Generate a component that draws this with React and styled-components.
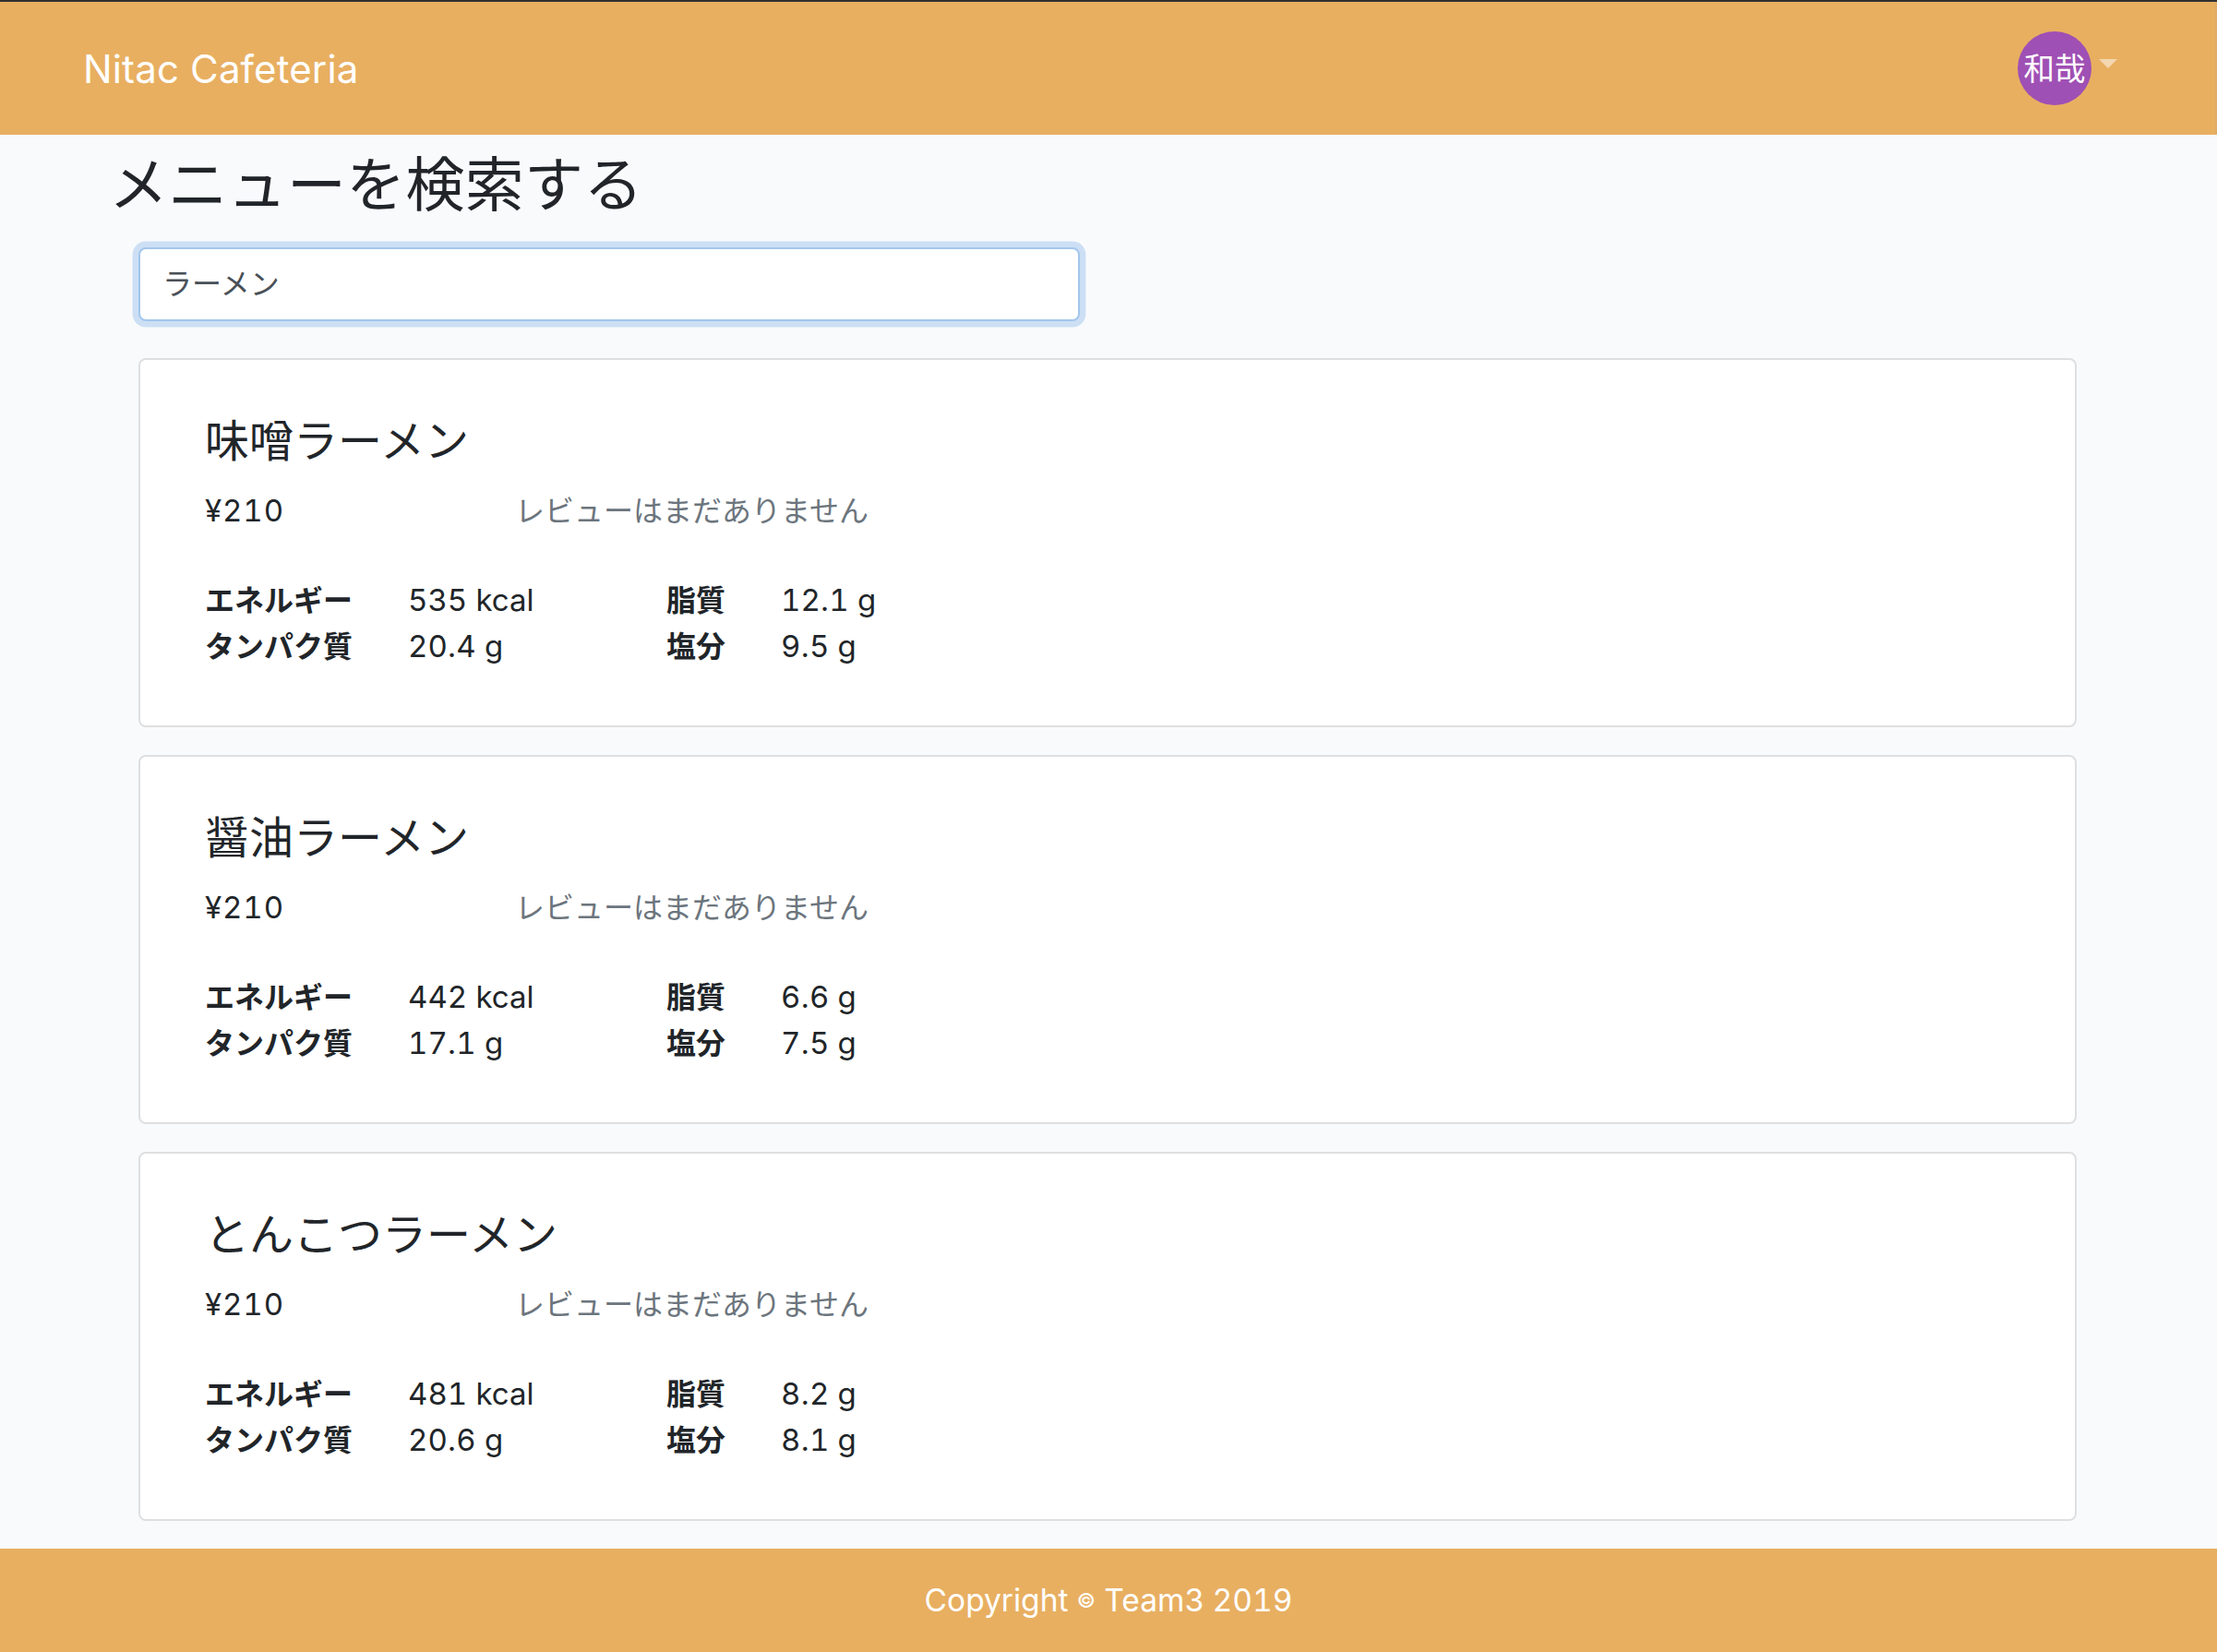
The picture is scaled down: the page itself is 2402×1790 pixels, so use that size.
import React, { useState } from "react";
import styled, { createGlobalStyle } from "styled-components";

const GlobalStyle = createGlobalStyle`
  *, *::before, *::after { box-sizing: border-box; }
  body {
    margin: 0;
    background: #f9fafc;
    color: #212529;
    font-family: "Noto Sans CJK JP", sans-serif;
    font-size: 32px;
    line-height: 50px;
  }
`;

const Page = styled.div`
  display: flex;
  flex-direction: column;
  height: 1790px;
  border-top: 2px solid #303030;
`;

const Latin = styled.span`
  font-family: Inter, "Noto Sans CJK JP", sans-serif;
  font-weight: 400;
  font-size: ${(p) => p.$size || 33}px;
  letter-spacing: ${(p) => p.$spacing || 0}px;
  white-space: pre;
`;

const Digits = styled.span`
  font-variant-numeric: tabular-nums;
`;

const Navbar = styled.nav`
  display: flex;
  align-items: center;
  justify-content: space-between;
  flex: none;
  height: 144px;
  padding: 0 106px 0 90px;
  border-right: 2px solid #dfac66;
  background: #e8af61;
  color: #fff;
`;

const Brand = styled.a`
  padding-top: 2px;
  line-height: 60px;
`;

const UserMenu = styled.div`
  display: flex;
  align-items: center;
  gap: 8px;
`;

const Avatar = styled.div`
  display: flex;
  align-items: center;
  justify-content: center;
  width: 80px;
  height: 80px;
  padding-bottom: 2px;
  border-radius: 50%;
  background: #9f50b4;
  font-size: 33.6px;
  white-space: nowrap;
`;

const Caret = styled.span`
  border: 10px solid transparent;
  border-top-color: rgba(255, 255, 255, 0.5);
  border-bottom: 0;
  margin-bottom: 10px;
`;

const Main = styled.main`
  flex: 1;
  padding: 10px 152px 0 150px;
`;

const Heading = styled.h1`
  margin: 0 0 34px -32px;
  font-size: 64px;
  font-weight: 400;
  line-height: 78px;
  letter-spacing: 0.3px;
`;

const SearchInput = styled.input`
  display: block;
  width: 1020px;
  height: 80px;
  margin-bottom: 40px;
  padding: 0 24px 6px;
  border: 2px solid #a3c6ec;
  border-radius: 8px;
  outline: 0;
  background: #fff;
  box-shadow: 0 0 0 6.4px #ccdff4;
  color: #495057;
  font: inherit;
`;

const MenuList = styled.div`
  display: flex;
  flex-direction: column;
  gap: 30px;
`;

const Card = styled.article`
  height: 400px;
  padding: 55px 70px 0;
  border: 2px solid #dedfe0;
  border-radius: 8px;
  background: #fff;
`;

const Title = styled.h2`
  margin: 0 0 23px;
  font-size: 48px;
  font-weight: 400;
  line-height: 58px;
`;

const Summary = styled.div`
  display: grid;
  grid-template-columns: 336px auto;
  align-items: start;
  margin-bottom: 45px;
`;

const Price = styled.div`
  padding-top: 1px;
  line-height: 49px;
`;

const Review = styled.span`
  color: #6c757d;
`;

const Nutrition = styled.dl`
  display: grid;
  grid-template-columns: 220px 280px 124px auto;
  grid-auto-rows: 50px;
  margin: 0;
`;

const Label = styled.dt`
  font-weight: 700;
`;

const Value = styled.dd`
  margin: 0;
`;

const Footer = styled.footer`
  display: flex;
  align-items: center;
  justify-content: center;
  flex: none;
  height: 112px;
  background: #e8af61;
  color: #fff;
`;

const Mark = styled.span`
  font-size: 22px;
  font-weight: 500;
  line-height: 1;
  vertical-align: 4px;
`;

const menus = [
  { name: "味噌ラーメン", price: 210, energy: "535", fat: "12.1", protein: "20.4", salt: "9.5" },
  { name: "醤油ラーメン", price: 210, energy: "442", fat: "6.6", protein: "17.1", salt: "7.5" },
  { name: "とんこつラーメン", price: 210, energy: "481", fat: "8.2", protein: "20.6", salt: "8.1" },
];

function Amount({ value }) {
  const [whole, fraction] = value.split(".");
  return (
    <>
      <Digits>{whole}</Digits>
      {fraction && <>.<Digits>{fraction}</Digits></>}
    </>
  );
}

function Fact({ label, value, unit }) {
  return (
    <>
      <Label>{label}</Label>
      <Value><Latin><Amount value={value} /> {unit}</Latin></Value>
    </>
  );
}

function MenuCard({ menu }) {
  return (
    <Card>
      <Title>{menu.name}</Title>
      <Summary>
        <Price><Latin $spacing={0.9}><Digits>¥{menu.price}</Digits></Latin></Price>
        <Review>レビューはまだありません</Review>
      </Summary>
      <Nutrition>
        <Fact label="エネルギー" value={menu.energy} unit="kcal" />
        <Fact label="脂質" value={menu.fat} unit="g" />
        <Fact label="タンパク質" value={menu.protein} unit="g" />
        <Fact label="塩分" value={menu.salt} unit="g" />
      </Nutrition>
    </Card>
  );
}

export default function App() {
  const [query, setQuery] = useState("ラーメン");
  return (
    <>
      <GlobalStyle />
      <Page>
        <Navbar>
          <Brand><Latin $size={42} $spacing={0.15}>Nitac Cafeteria</Latin></Brand>
          <UserMenu>
            <Avatar>和哉</Avatar>
            <Caret />
          </UserMenu>
        </Navbar>
        <Main>
          <Heading>メニューを検索する</Heading>
          <SearchInput value={query} onChange={(e) => setQuery(e.target.value)} />
          <MenuList>
            {menus.map((menu) => <MenuCard key={menu.name} menu={menu} />)}
          </MenuList>
        </Main>
        <Footer>
          <Latin $size={33.5}>Copyright <Mark>©</Mark> Team3 <Digits>2019</Digits></Latin>
        </Footer>
      </Page>
    </>
  );
}
